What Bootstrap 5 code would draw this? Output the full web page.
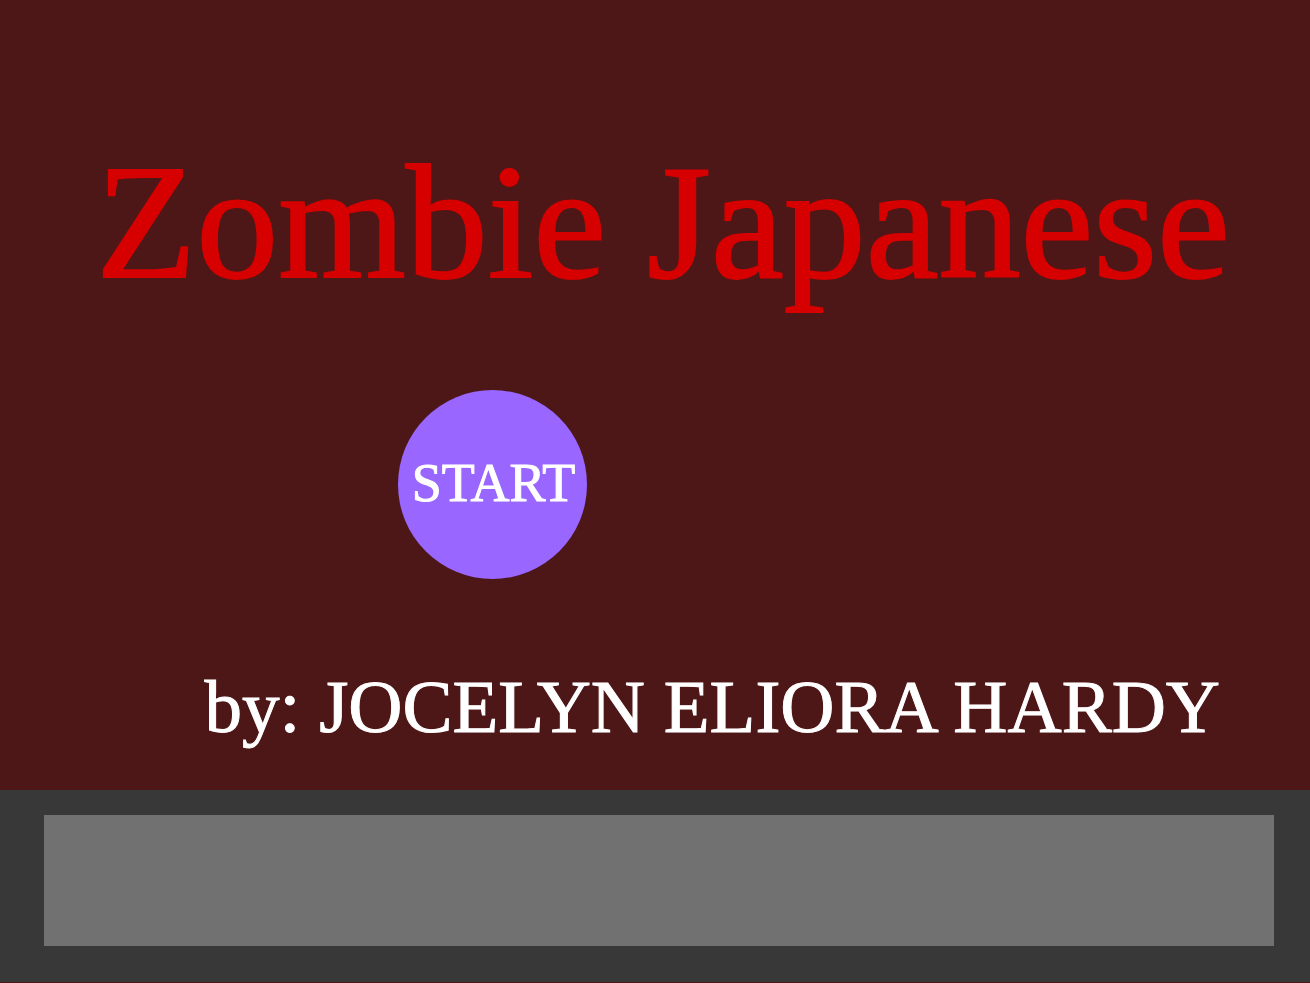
<!DOCTYPE html>
<html lang="en">
<head>
<meta charset="utf-8">
<meta name="viewport" content="width=device-width, initial-scale=1">
<title>Zombie Japanese</title>
<link href="https://cdn.jsdelivr.net/npm/bootstrap@5.3.0/dist/css/bootstrap.min.css" rel="stylesheet">
<style>
body { background: #4d1617; font-family: "Liberation Serif", serif; color: #fff; }
.stage { padding: 122px 80px 0 96px; }
.game-title { color: #d60000; font-size: 164px; line-height: 200px; white-space: nowrap; -webkit-text-stroke: 2px #d60000; }
.start-row { padding-left: 302px; margin-top: 68px; }
.start-btn { width: 189px; height: 189px; background: #9966ff; color: #fff; font-size: 54px; line-height: 60px; padding: 0 0 4px 2px; -webkit-text-stroke: 1px #fff; }
.start-btn:hover { background: #8a55f5; color: #fff; }
.byline { font-size: 75px; line-height: 88px; margin-top: 84px; padding: 0 10px 39px 0; white-space: nowrap; -webkit-text-stroke: 1px #fff; }
.dialog-bar { background: #383838; padding: 25px 36px 36px 44px; margin-bottom: 2px; }
.dialog-text { background: #717171; height: 131px; resize: none; }
</style>
</head>
<body>
<div class="min-vh-100 d-flex flex-column overflow-hidden">
<main class="stage flex-grow-1">
<h1 class="game-title fw-normal m-0">Zombie Japanese</h1>
<div class="start-row"><button type="button" class="start-btn btn rounded-circle border-0">START</button></div>
<p class="byline text-end mb-0">by: JOCELYN ELIORA HARDY</p>
</main>
<footer class="dialog-bar">
<textarea class="dialog-text d-block w-100 border-0 rounded-0" aria-label="Dialogue" readonly></textarea>
</footer>
</div>
<script src="https://cdn.jsdelivr.net/npm/bootstrap@5.3.0/dist/js/bootstrap.bundle.min.js"></script>
</body>
</html>
